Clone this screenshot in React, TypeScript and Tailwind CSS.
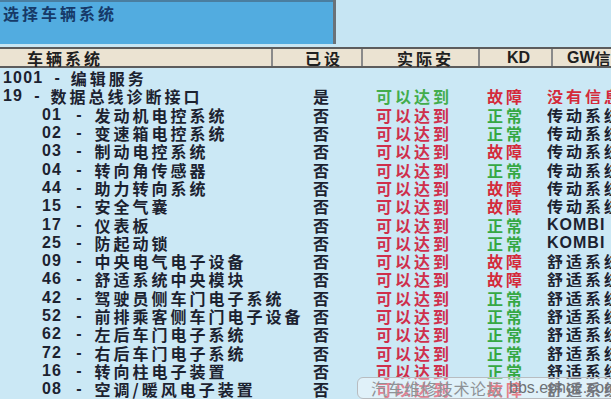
import React from "react";

type Row = {
  code: string;
  name: string;
  level: 0 | 1;
  set?: string;
  reach?: "green" | "red";
  kd?: "ok" | "fault";
  gw?: string;
  gwRed?: boolean;
};

const ROWS: Row[] = [
  { code: "1001", name: "编辑服务", level: 0 },
  { code: "19", name: "数据总线诊断接口", level: 0, set: "是", reach: "green", kd: "fault", gw: "没有信息", gwRed: true },
  { code: "01", name: "发动机电控系统", level: 1, set: "否", reach: "red", kd: "ok", gw: "传动系统" },
  { code: "02", name: "变速箱电控系统", level: 1, set: "否", reach: "red", kd: "ok", gw: "传动系统" },
  { code: "03", name: "制动电控系统", level: 1, set: "否", reach: "red", kd: "fault", gw: "传动系统" },
  { code: "04", name: "转向角传感器", level: 1, set: "否", reach: "red", kd: "ok", gw: "传动系统" },
  { code: "44", name: "助力转向系统", level: 1, set: "否", reach: "red", kd: "fault", gw: "传动系统" },
  { code: "15", name: "安全气囊", level: 1, set: "否", reach: "red", kd: "fault", gw: "传动系统" },
  { code: "17", name: "仪表板", level: 1, set: "否", reach: "red", kd: "ok", gw: "KOMBI" },
  { code: "25", name: "防起动锁", level: 1, set: "否", reach: "red", kd: "ok", gw: "KOMBI" },
  { code: "09", name: "中央电气电子设备", level: 1, set: "否", reach: "red", kd: "fault", gw: "舒适系统" },
  { code: "46", name: "舒适系统中央模块", level: 1, set: "否", reach: "red", kd: "fault", gw: "舒适系统" },
  { code: "42", name: "驾驶员侧车门电子系统", level: 1, set: "否", reach: "red", kd: "ok", gw: "舒适系统" },
  { code: "52", name: "前排乘客侧车门电子设备", level: 1, set: "否", reach: "red", kd: "ok", gw: "舒适系统" },
  { code: "62", name: "左后车门电子系统", level: 1, set: "否", reach: "red", kd: "ok", gw: "舒适系统" },
  { code: "72", name: "右后车门电子系统", level: 1, set: "否", reach: "red", kd: "ok", gw: "舒适系统" },
  { code: "16", name: "转向柱电子装置", level: 1, set: "否", reach: "red", kd: "ok", gw: "舒适系统" },
  { code: "08", name: "空调/暖风电子装置", level: 1, set: "否", reach: "red", kd: "fault", gw: "舒适系统" },
];

const cjk = "font-['Noto_Sans_CJK_SC',sans-serif]";
const latin = "font-['Liberation_Sans','Noto_Sans_CJK_SC',sans-serif]";

export default function App() {
  return (
    <div className="relative w-[611px] h-[399px] overflow-hidden bg-[#cbe8f5] font-bold text-[#1c2230] text-[16px] leading-none">
      {/* title strip */}
      <div className="flex h-[44px]">
        <div className={`w-[333px] shrink-0 bg-[#52ace0] border-t-2 border-[#4a7ea0] pl-[3px] pt-[3px] text-[#163a68] tracking-[3px] ${cjk}`}>
          选择车辆系统
        </div>
        <div className="w-[3px] shrink-0 bg-[#6a7278]" />
        <div className="flex-1 bg-[#c6e5f3]" />
      </div>
      <div className="h-[3px] bg-[#c8e6f3]" />

      {/* header */}
      <div className={`flex h-[21px] bg-[#ebe3d2] border-y-2 border-[#5c5c5c] text-[#202020] ${cjk}`}>
        <div className="w-[273px] shrink-0 flex items-center pl-[27px] tracking-[3px] border-r-2 border-[#8a8a8a]">车辆系统</div>
        <div className="w-[90px] shrink-0 flex items-center justify-center pl-[14px] tracking-[3px] border-r-2 border-[#8a8a8a]">已设</div>
        <div className="w-[117px] shrink-0 flex items-center justify-center pl-[10px] tracking-[3px] border-r-2 border-[#8a8a8a]">实际安</div>
        <div className="w-[73px] shrink-0 flex items-center justify-center pl-[6px] border-r-2 border-[#8a8a8a]">
          <span className={latin}>KD</span>
        </div>
        <div className="flex-1 min-w-0 overflow-hidden flex items-center pl-[14px] whitespace-nowrap">
          <span className={latin}>GW</span>
          <span className="tracking-[3px]">信息</span>
        </div>
      </div>

      {/* rows */}
      <div className="pt-[1px]">
        {ROWS.map((r) => (
          <div key={r.code} className="flex items-center h-[18.3px] whitespace-nowrap">
            <div className={`w-[313px] shrink-0 flex items-center ${r.level === 1 ? "pl-[42px]" : "pl-[3px]"}`}>
              <span className={`${latin} tracking-[1.2px]`}>{r.code}</span>
              <span className={`${latin} ${r.level === 1 ? "pl-[14px] pr-[13px]" : "pl-[11px] pr-[11px]"}`}>-</span>
              <span className={`${cjk} tracking-[3px]`}>{r.name}</span>
            </div>
            <div className={`w-[63px] shrink-0 ${cjk}`}>{r.set}</div>
            <div className={`w-[111px] shrink-0 tracking-[3px] ${cjk} ${r.reach === "green" ? "text-[#42ad4c]" : "text-[#cf2f4c]"}`}>
              {r.reach ? "可以达到" : ""}
            </div>
            <div className={`w-[60px] shrink-0 tracking-[3px] ${cjk} ${r.kd === "ok" ? "text-[#36a844]" : "text-[#d42a3a]"}`}>
              {r.kd === "ok" ? "正常" : r.kd === "fault" ? "故障" : ""}
            </div>
            <div className={`flex-1 min-w-0 overflow-hidden ${r.gw === "KOMBI" ? `${latin} tracking-[1px]` : `${cjk} tracking-[3px]`} ${r.gwRed ? "text-[#d42a3a]" : ""}`}>
              {r.gw}
            </div>
          </div>
        ))}
      </div>

      {/* forum watermark */}
      <div className="absolute left-[357px] top-[377px] w-[270px] h-[22px] rounded-[6px] border border-[#b8bcc0] bg-white/40 flex items-center pl-[13px] whitespace-nowrap text-[16px] font-normal">
        <span className={`${cjk} text-[#8e9296] tracking-[0.5px]`}>汽车维修技术论坛</span>
        <span className={`${latin} text-[#6e7276] pl-[6px]`}>bbs.ephoz.com</span>
      </div>
    </div>
  );
}
